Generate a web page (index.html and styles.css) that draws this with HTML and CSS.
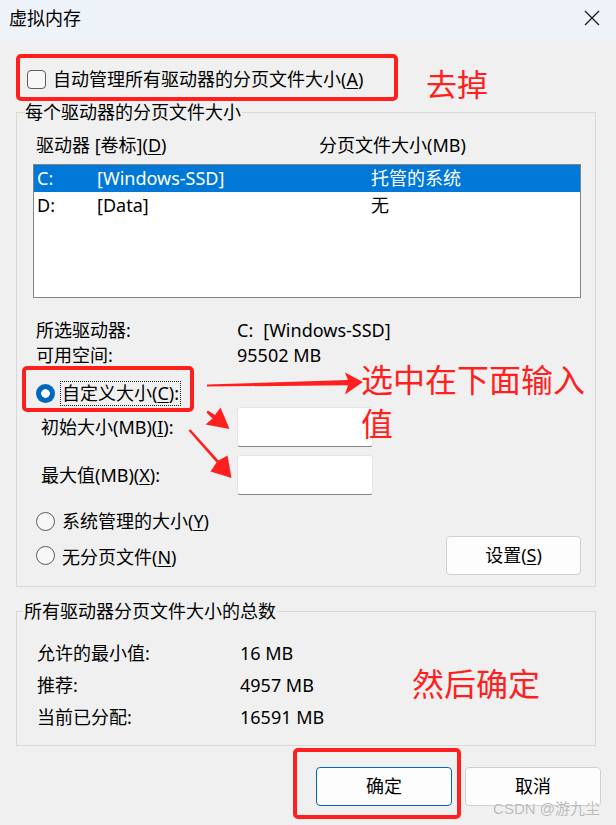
FILE: index.html
```html
<!DOCTYPE html>
<html lang="zh">
<head>
<meta charset="utf-8">
<title>虚拟内存</title>
<link rel="stylesheet" href="styles.css">
</head>
<body>
<div class="window">
  <div class="titlebar">
    <span class="title">虚拟内存</span>
    <svg class="close" width="16" height="16" viewBox="0 0 16 16"><path d="M1 1 L15 15 M15 1 L1 15" stroke="#1a1a1a" stroke-width="1.3" fill="none"/></svg>
  </div>
  <div class="content">
    <div class="auto-row"><span class="checkbox"></span><span>自动管理所有驱动器的分页文件大小(<u>A</u>)</span></div>

    <fieldset class="group g1">
      <legend>每个驱动器的分页文件大小</legend>
      <div class="list-head"><span class="lh-drive">驱动器 [卷标](<u>D</u>)</span><span>分页文件大小(MB)</span></div>
      <div class="listbox">
        <div class="lrow sel"><span class="c1">C:</span><span class="c2">[Windows-SSD]</span><span>托管的系统</span></div>
        <div class="lrow"><span class="c1">D:</span><span class="c2">[Data]</span><span>无</span></div>
      </div>
      <div class="info">
        <div class="irow"><span class="ilabel">所选驱动器:</span><span>C:</span><span class="vol">[Windows-SSD]</span></div>
        <div class="irow"><span class="ilabel">可用空间:</span><span>95502 MB</span></div>
      </div>
      <div class="radio-row custom"><span class="radio on"></span><span class="focus">自定义大小(<u>C</u>):</span></div>
      <div class="size-row r1"><span class="slabel">初始大小(MB)(<u>I</u>):</span><span class="input"></span></div>
      <div class="size-row r2"><span class="slabel">最大值(MB)(<u>X</u>):</span><span class="input"></span></div>
      <div class="radio-row sys"><span class="radio"></span><span>系统管理的大小(<u>Y</u>)</span></div>
      <div class="radio-row last"><span class="radio"></span><span class="grow">无分页文件(<u>N</u>)</span><button class="btn">设置(<u>S</u>)</button></div>
    </fieldset>

    <fieldset class="group g2">
      <legend>所有驱动器分页文件大小的总数</legend>
      <div class="totals">
        <div class="trow"><span class="tlabel">允许的最小值:</span><span>16 MB</span></div>
        <div class="trow"><span class="tlabel">推荐:</span><span>4957 MB</span></div>
        <div class="trow"><span class="tlabel">当前已分配:</span><span>16591 MB</span></div>
      </div>
    </fieldset>

    <div class="buttons">
      <button class="btn primary">确定</button>
      <button class="btn">取消</button>
    </div>
  </div>

  <div class="annot">
    <div class="mark box1"></div>
    <div class="mark box2"></div>
    <div class="mark box3"></div>
    <div class="note n1">去掉</div>
    <div class="note n2">选中在下面输入<br>值</div>
    <div class="note n3">然后确定</div>
    <svg class="arrows" width="616" height="825" viewBox="0 0 616 825">
      <polygon fill="#ff1f1f" points="207,384.6 348,380 345,372.5 363,382 345,394.5 348,385.2 207,386.6"/>
      <polygon fill="#ff1f1f" points="207.8,410.6 215,415 220.5,407.5 229.5,429 205.5,424.5 212.5,418.5 206.5,412.6"/>
      <polygon fill="#ff1f1f" points="190.4,429.2 218.5,460.5 227.5,455.5 231.5,478 210.5,471.5 216.5,462.5 188.6,430.8"/>
    </svg>
    <div class="watermark">CSDN @游九尘</div>
  </div>
</div>
</body>
</html>
```
FILE: styles.css
```css
* { box-sizing: border-box; }
html, body { margin: 0; padding: 0; }
body {
  width: 616px;
  height: 825px;
  overflow: hidden;
  background: #f0f0f0;
  font-family: "Noto Sans", "Noto Sans CJK SC", sans-serif;
  font-size: 18px;
  color: #000;
}
.window { position: relative; width: 616px; height: 825px; }
u { text-decoration: underline; text-underline-offset: 2px; text-decoration-thickness: 1px; }

.titlebar {
  height: 40px;
  background: #eef2f9;
  display: flex;
  justify-content: space-between;
  align-items: flex-start;
  padding: 8px 16px 0 9px;
}
.title { line-height: 20px; font-size: 18px; }
.close { margin-top: 2px; }

.content { padding: 0 15px 0 16px; }

.auto-row {
  margin-top: 29px;
  height: 20px;
  line-height: 20px;
  display: flex;
  align-items: center;
  padding-left: 11px;
  gap: 7px;
}
.checkbox {
  width: 19px; height: 19px;
  border: 1px solid #5c5c5c;
  border-radius: 4px;
  background: #f7f7f7;
}

.group {
  margin: 0 5px 0 0;
  border: 1px solid #d9d9d9;
  min-width: 0;
}
.group legend { line-height: 20px; padding: 0 1px; }
.g1 { margin-top: 13px; padding: 0 14px 11px 16px; }
.g1 legend { margin-left: -9px; }
.g2 { margin-top: 14px; padding: 0 14px 12px 20px; }
.g2 legend { margin-left: -14px; }

.list-head {
  margin-top: 13px;
  line-height: 20px;
  display: flex;
  padding-left: 3px;
}
.lh-drive { width: 283px; }

.listbox {
  margin-top: 9px;
  height: 134px;
  background: #fff;
  border: 1px solid #848484;
}
.lrow { display: flex; height: 27px; line-height: 27px; padding-left: 3px; }
.lrow.sel { background: #0078d7; color: #fff; }
.c1 { width: 60px; }
.c2 { width: 274px; }

.info { margin-top: 20px; }
.irow { display: flex; line-height: 25px; padding-left: 3px; }
.ilabel { width: 201px; }
.vol { margin-left: 10px; }

.radio-row { display: flex; align-items: center; padding-left: 3px; }
.radio {
  width: 19px; height: 19px;
  border-radius: 50%;
  border: 1px solid #5c5c5c;
  background: #f7f7f7;
  flex: none;
}
.radio.on {
  border: none;
  background: radial-gradient(circle, #fff 0 4px, #0067c0 4.6px);
}
.custom { margin-top: 13px; height: 25px; }
.focus {
  margin-left: 5px;
  border: 1px dotted #222;
  line-height: 23px;
  padding: 0 1px;
}
.sys { margin-top: 16px; height: 20px; line-height: 20px; }
.sys .radio + span, .last .grow { margin-left: 7px; }
.last { margin-top: 5px; height: 39px; }
.grow { flex: 1; }

.size-row { display: flex; align-items: center; padding-left: 8px; }
.r1 { margin-top: 1px; }
.r2 { margin-top: 8px; }
.slabel { width: 196px; line-height: 20px; }
.input {
  width: 136px; height: 40px;
  background: #fff;
  border: 1px solid #e6e6e6;
  border-bottom: 1px solid #858585;
  border-radius: 3px;
}

.btn {
  font: inherit;
  color: #000;
  width: 135px;
  height: 39px;
  background: #fdfdfd;
  border: 1px solid #d0d0d0;
  border-radius: 4px;
  padding: 0;
  line-height: 37px;
}
.btn.primary { border-color: #0067c0; }

.totals { margin-top: 16px; }
.trow { display: flex; line-height: 32px; }
.tlabel { width: 203px; }

.buttons {
  margin-top: 21px;
  display: flex;
  justify-content: flex-end;
  gap: 13px;
}
.buttons .btn { width: 136px; }

.annot { position: absolute; inset: 0; pointer-events: none; }
.mark {
  position: absolute;
  border: 4px solid #ff1f1f;
  border-radius: 5px;
}
.box1 { left: 16px; top: 54px; width: 382px; height: 47px; }
.box2 { left: 22px; top: 366px; width: 172px; height: 46px; }
.box3 { left: 293px; top: 748px; width: 168px; height: 71px; }
.note {
  position: absolute;
  color: #ff1f1f;
  font-family: "Noto Sans CJK SC", sans-serif;
  font-size: 32px;
  line-height: 44px;
  white-space: nowrap;
}
.n1 { left: 426px; top: 61px; font-size: 31px; line-height: 44px; }
.n2 { left: 361px; top: 356px; }
.n3 { left: 412px; top: 660px; }
.arrows { position: absolute; left: 0; top: 0; }
.watermark {
  position: absolute;
  right: 16px;
  top: 799px;
  font-family: "Liberation Sans", "Noto Sans CJK SC", sans-serif;
  font-size: 15px;
  line-height: 20px;
  color: #b9b9b9;
  text-shadow: 0 0 1px #fff;
}
```
